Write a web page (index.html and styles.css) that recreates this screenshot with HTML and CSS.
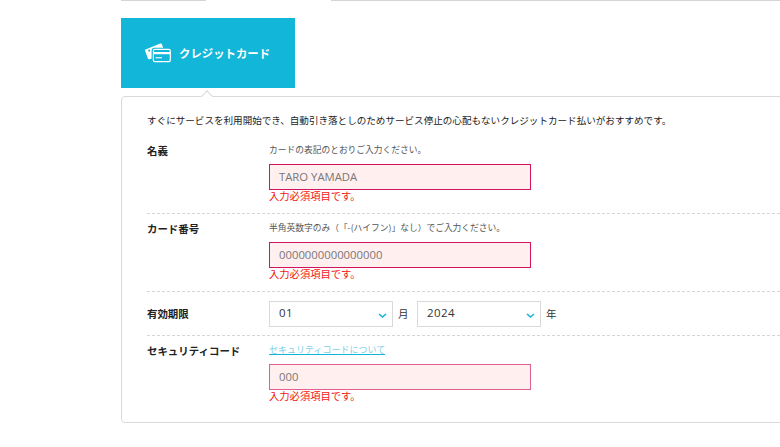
FILE: index.html
```html
<!DOCTYPE html>
<html lang="ja">
<head>
<meta charset="utf-8">
<title>クレジットカード</title>
<link rel="stylesheet" href="styles.css">
</head>
<body>
<div class="page">
  <div class="topline">
    <span class="topline-a"></span>
    <span class="topline-b"></span>
  </div>
  <div class="tab">
    <svg class="tab-icon" width="26" height="20" viewBox="0 0 26 20">
      <path d="M0.6 6.4 L15.2 0.6 Q16.4 0.2 16.9 1.3 L18.2 4.8 H9.6 Q6.6 4.8 6.6 7.8 V15.4 L4.6 16.2 Q3.4 16.6 2.9 15.5 L0.1 7.8 Q-0.2 6.8 0.6 6.4 Z" fill="#fff"/>
      <circle cx="4.2" cy="7.6" r="1.1" fill="#12b6d8"/>
      <rect x="8.4" y="6.4" width="16.9" height="12.2" rx="1.4" fill="none" stroke="#fff" stroke-width="1.2"/>
      <rect x="8.4" y="9" width="16.9" height="2.2" fill="#fff"/>
      <rect x="10.6" y="14.2" width="6.4" height="1.1" fill="#fff"/>
    </svg>
    <span class="tab-label">クレジットカード</span>
  </div>
  <section class="panel">
    <span class="notch"></span>
    <p class="intro">すぐにサービスを利用開始でき、自動引き落としのためサービス停止の心配もないクレジットカード払いがおすすめです。</p>
    <div class="row row-name">
      <div class="label">名義</div>
      <div class="field">
        <p class="hint">カードの表記のとおりご入力ください。</p>
        <div class="input">TARO YAMADA</div>
        <p class="error">入力必須項目です。</p>
      </div>
    </div>
    <div class="row row-number">
      <div class="label">カード番号</div>
      <div class="field">
        <p class="hint">半角英数字のみ（「-(ハイフン)」なし）でご入力ください。</p>
        <div class="input">0000000000000000</div>
        <p class="error">入力必須項目です。</p>
      </div>
    </div>
    <div class="row row-expiry">
      <div class="label">有効期限</div>
      <div class="selects">
        <div class="select">01<svg class="chev" width="9" height="6" viewBox="0 0 9 6"><path d="M1 1 L4.5 4 L8 1" fill="none" stroke="#12b6d8" stroke-width="1.6"/></svg></div>
        <span class="unit">月</span>
        <div class="select">2024<svg class="chev" width="9" height="6" viewBox="0 0 9 6"><path d="M1 1 L4.5 4 L8 1" fill="none" stroke="#12b6d8" stroke-width="1.6"/></svg></div>
        <span class="unit">年</span>
      </div>
    </div>
    <div class="row row-code">
      <div class="label">セキュリティコード</div>
      <div class="field">
        <a class="link" href="#">セキュリティコードについて</a>
        <div class="input input-soft">000</div>
        <p class="error">入力必須項目です。</p>
      </div>
    </div>
  </section>
</div>
</body>
</html>
```
FILE: styles.css
```css
* { box-sizing: border-box; }
html, body { margin: 0; padding: 0; background: #fff; overflow: hidden; }
body {
  width: 780px;
  height: 447px;
  font-family: "Noto Sans CJK JP", "Noto Sans", sans-serif;
  color: #222;
  text-spacing-trim: space-all;
}
.page { padding-left: 121px; width: 780px; height: 447px; overflow: hidden; }
.topline { display: flex; height: 1px; width: 700px; margin-bottom: 17px; }
.topline-a { width: 85px; background: #d4d4d4; }
.topline-b { width: 449px; margin-left: 125px; background: #d4d4d4; }
.tab {
  width: 174px;
  height: 70px;
  background: #12b6d8;
  display: flex;
  align-items: center;
  padding-left: 24px;
  gap: 8px;
  margin-bottom: 8px;
}
.tab-icon { flex: none; }
.tab-label { color: #fff; font-size: 11.4px; font-weight: 700; line-height: 16px; margin-top: -1px; white-space: nowrap; }
.panel {
  position: relative;
  width: 720px;
  height: 327px;
  border: 1px solid #d9d9d9;
  border-radius: 4px;
  padding: 15px 25px 0;
}
.notch {
  position: absolute;
  left: 81px;
  top: -5px;
  width: 8px;
  height: 8px;
  background: #fff;
  border-top: 1px solid #d9d9d9;
  border-left: 1px solid #d9d9d9;
  transform: rotate(45deg);
}
.intro { margin: 0 0 8px; font-size: 9.57px; line-height: 16px; white-space: nowrap; color: #222; }
.row { display: flex; padding-top: 7px; border-bottom: 1px dashed #d6d6d6; }
.row-name { height: 78px; }
.row-number { height: 78px; }
.row-expiry { height: 44px; padding-top: 9px; align-items: flex-start; }
.row-code { border-bottom: 0; }
.label { width: 122px; flex: none; font-size: 10.45px; font-weight: 700; line-height: 16px; color: #222; white-space: nowrap; }
.row-expiry .label { padding-top: 5px; }
.field { flex: 1; }
.hint { margin: -1px 0 6px; font-size: 8.74px; line-height: 16px; color: #555; white-space: nowrap; }
.input {
  width: 262px;
  height: 26px;
  background: #ffefef;
  border: 1px solid #d2145f;
  padding-left: 9px;
  font-family: "Open Sans", "Noto Sans", sans-serif;
  font-size: 11.3px;
  line-height: 23px;
  color: #777;
}
.input-soft { border-color: #e0608f; }
.error { margin: 0; font-size: 10.3px; line-height: 12px; color: #f41414; white-space: nowrap; }
.selects { display: flex; align-items: center; }
.select {
  position: relative;
  width: 124px;
  height: 26px;
  border: 1px solid #d9d9d9;
  padding-left: 9px;
  font-family: "Open Sans", "Noto Sans", sans-serif;
  font-size: 11.5px;
  line-height: 21px;
  color: #333;
  letter-spacing: 0.4px;
}
.chev { position: absolute; right: 5px; top: 11px; }
.unit { width: 24px; padding-left: 5px; font-size: 10.5px; line-height: 16px; color: #333; }
.link { display: block; width: max-content; height: 10px; margin: 2px 0 9px; font-size: 9px; line-height: 10px; color: #7fcfe4; text-decoration: none; border-bottom: 1px solid #12b6d8; white-space: nowrap; }
```
